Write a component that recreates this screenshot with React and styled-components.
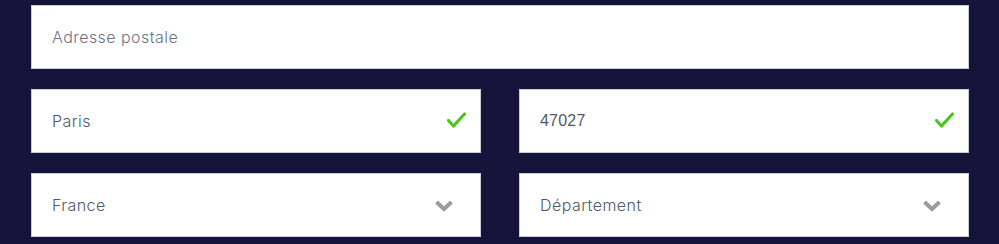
import styled, { createGlobalStyle } from 'styled-components';

const GlobalStyle = createGlobalStyle`
  html, body {
    margin: 0;
    background: #16133b;
  }
`;

const Form = styled.div`
  display: flex;
  flex-direction: column;
  gap: 20px;
  padding: 5px 31px 0;
  width: 938px;
`;

const Row = styled.div`
  display: grid;
  grid-template-columns: ${(p) => (p.$split ? '1fr 1fr' : '1fr')};
  gap: 38px;
`;

const Field = styled.div`
  box-sizing: border-box;
  height: 64px;
  background: #fff;
  border: 1px solid #c9cdd6;
  display: flex;
  align-items: center;
  justify-content: space-between;
  padding: 0 13px 0 20px;
`;

const Text = styled.span`
  font-family: ${(p) => (p.$digits ? '"Liberation Sans", Arial, sans-serif' : 'Inter, "Open Sans", sans-serif')};
  font-weight: 300;
  font-size: 16px;
  letter-spacing: ${(p) => (p.$digits ? '0.2px' : '0.45px')};
  color: ${(p) => (p.$placeholder ? '#6c7482' : '#525869')};
  margin-top: -1px;
`;

const Icon = styled.svg`
  width: 22px;
  height: 22px;
  flex-shrink: 0;
  margin-right: ${(p) => p.$offset || 0}px;
`;

const Check = () => (
  <Icon viewBox="0 0 22 22">
    <path d="M3.5 10.5 L8.5 16 L19.5 4" fill="none" stroke="#4cc41b" strokeWidth="3.2" strokeLinecap="round" strokeLinejoin="round" />
  </Icon>
);

const Chevron = () => (
  <Icon viewBox="0 0 22 22" $offset={12}>
    <path d="M3.5 8 L11 15 L18.5 8" fill="none" stroke="#9b9b9b" strokeWidth="4" strokeLinejoin="miter" />
  </Icon>
);

export default function App() {
  return (
    <>
      <GlobalStyle />
      <Form>
        <Row>
          <Field>
            <Text $placeholder>Adresse postale</Text>
          </Field>
        </Row>
        <Row $split>
          <Field>
            <Text>Paris</Text>
            <Check />
          </Field>
          <Field>
            <Text $digits>47027</Text>
            <Check />
          </Field>
        </Row>
        <Row $split>
          <Field>
            <Text>France</Text>
            <Chevron />
          </Field>
          <Field>
            <Text>Département</Text>
            <Chevron />
          </Field>
        </Row>
      </Form>
    </>
  );
}
